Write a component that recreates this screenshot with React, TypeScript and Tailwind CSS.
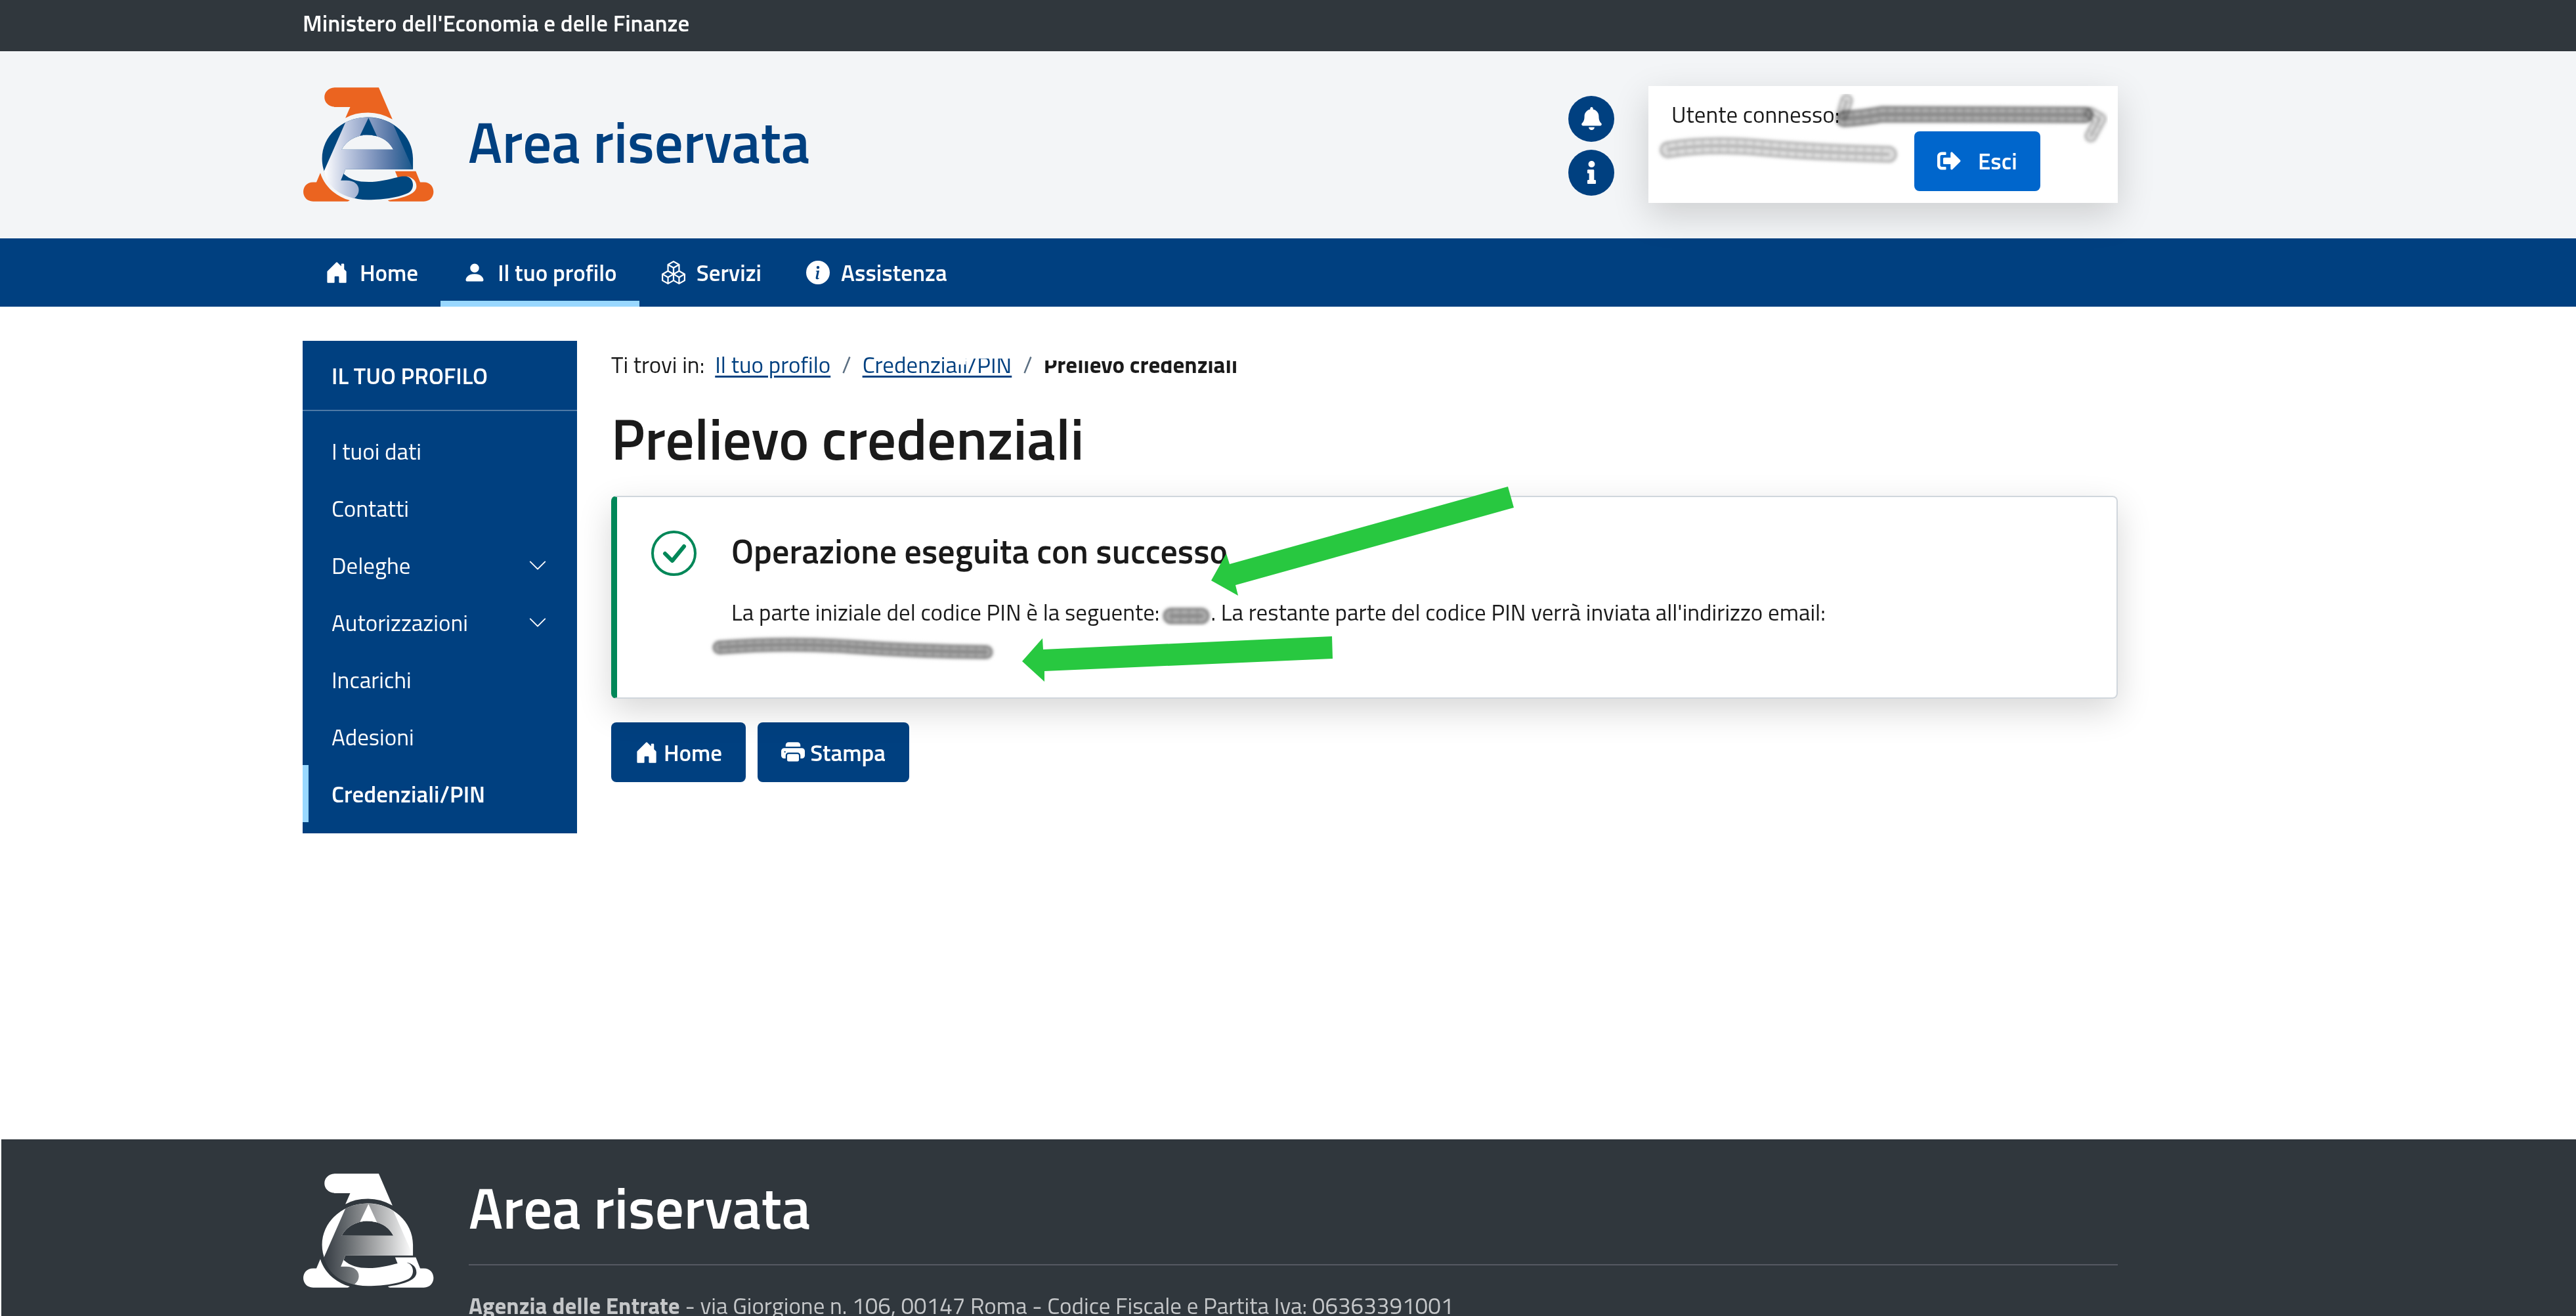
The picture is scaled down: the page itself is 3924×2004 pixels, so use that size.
import type { ReactNode } from "react";
import {
  BsBoxes,
  BsChevronDown,
  BsHouseDoorFill,
  BsInfoCircleFill,
  BsPersonFill,
  BsPrinterFill,
} from "react-icons/bs";
import { FaBell, FaInfo, FaSignOutAlt } from "react-icons/fa";

type LogoProps = {
  id: string;
  outer: string;
  ring: string;
  stops: [string, string][];
};

function Logo({ id, outer, ring, stops }: LogoProps) {
  return (
    <svg viewBox="63 68 600 524" className="h-[174px] w-[200px] shrink-0" role="img" aria-label="Agenzia delle Entrate">
      <defs>
        <linearGradient id={id} gradientUnits="userSpaceOnUse" x1="160" y1="0" x2="568" y2="0">
          {stops.map(([offset, color]) => (
            <stop key={offset} offset={offset} stopColor={color} />
          ))}
        </linearGradient>
      </defs>
      <g fill={outer}>
        <path d="M213 69H411L474 215Q420 184 362 184Q300 184 258 209L280 158H213C145 158 145 69 213 69Z" />
        <path d="M143 460C160 520 215 570 278 586Q275 590 268 591H110C50 591 50 503 110 503H125Z" />
        <path d="M486 453H581L601 503H618C677 503 677 591 618 591H462Q455 590 453 586C510 578 584 562 584 522C584 498 568 484 545 477L498 482Z" />
      </g>
      <path
        fill={ring}
        fillRule="evenodd"
        d="M568 444V395C568 290 475 205 360 205C245 205 151 290 151 395C151 500 240 584 362 584C440 584 510 570 545 553C575 538 575 495 548 480C535 474 515 476 500 480C455 491 410 502 365 502C315 502 280 492 250 465L258 444ZM241 353C262 312 308 286 360 286C415 286 458 312 478 353Z"
      />
      <path
        fill={`url(#${id})`}
        fillRule="evenodd"
        d="M258 229Q305 205 362 205Q430 207 478 240L568 444H258L237 495H262C325 495 335 550 298 577C225 560 175 520 160 452ZM241 353C262 312 308 286 360 286C415 286 458 312 478 353Z"
      />
      <path fill={ring} d="M364 208L403 292Q360 281 325 289Z" />
    </svg>
  );
}

const headerStops: [string, string][] = [
  ["0", "#ffffff"],
  ["0.25", "#c0cae1"],
  ["0.5", "#8c9fc5"],
  ["0.75", "#5576a6"],
  ["1", "#17568a"],
];

const footerStops: [string, string][] = [
  ["0", "#363c43"],
  ["0.25", "#64696d"],
  ["0.5", "#97999b"],
  ["0.75", "#c8c9ca"],
  ["1", "#ffffff"],
];

type SmudgeProps = { d: string; width: number; viewBox: string; className: string; light?: boolean };

/* Brushed-out strip that covers personal data. */
function Smudge({ d, width, viewBox, className, light }: SmudgeProps) {
  return (
    <svg viewBox={viewBox} className={`mix-blend-multiply ${className}`} aria-hidden="true">
      <g fill="none" strokeLinejoin="round" strokeLinecap="round" className="blur-[2px]">
        <path d={d} stroke="#eeeeee" strokeWidth={width + 6} />
        <path d={d} stroke={light ? "#a0a0a0" : "#666666"} strokeWidth={width} />
        <path d={d} stroke={light ? "#dadada" : "#aaaaaa"} strokeWidth={width - 4} />
        <path d={d} stroke={light ? "#909090" : "#888888"} strokeWidth={light ? 2 : 5} />
        <path
          d={d}
          stroke={light ? "#bcbcbc" : "#8c8c8c"}
          strokeWidth={width - 4}
          strokeDasharray="2 11"
          strokeLinecap="butt"
        />
      </g>
    </svg>
  );
}

function NavItem({ icon, label, active }: { icon: ReactNode; label: string; active?: boolean }) {
  return (
    <li>
      <a
        href="#"
        className={`flex h-[104px] items-center gap-[17px] px-[34px] font-semibold text-white ${
          active ? "shadow-[inset_0_-9px_0_#99d8ff]" : ""
        }`}
      >
        {icon}
        {label}
      </a>
    </li>
  );
}

const sideItems = [
  { label: "I tuoi dati" },
  { label: "Contatti" },
  { label: "Deleghe", expandable: true },
  { label: "Autorizzazioni", expandable: true },
  { label: "Incarichi" },
  { label: "Adesioni" },
  { label: "Credenziali/PIN", active: true },
];

const buttonClass =
  "flex h-[91px] items-center gap-2 rounded-lg bg-[#004080] px-9 font-semibold text-white";

export default function App() {
  return (
    <div className="flex h-screen flex-col overflow-hidden bg-white font-['Titillium_Web',Roboto,sans-serif] text-[35px] leading-[52px] text-[#1a1a1a]">
      <div className="flex h-[78px] shrink-0 items-center bg-[#30373d] pr-[698px] pb-2 pl-[461px] font-semibold text-white">
        Ministero dell'Economia e delle Finanze
      </div>

      <header className="flex h-[285px] shrink-0 items-center bg-[#f3f5f7] pr-[698px] pb-0.5 pl-[461px]">
        <Logo id="logo-header" outer="#eb6420" ring="#00477f" stops={headerStops} />
        <div className="ml-[52px] flex-1 pb-2 text-[87px] leading-[104px] font-semibold text-[#004080]">
          Area riservata
        </div>
        <div className="mr-[52px] flex flex-col gap-3 pt-1">
          <button aria-label="Notifiche" className="flex size-[70px] items-center justify-center rounded-full bg-[#004080] text-white">
            <FaBell className="size-[35px]" />
          </button>
          <button aria-label="Informazioni" className="flex size-[70px] items-center justify-center rounded-full bg-[#004080] text-white">
            <FaInfo className="size-[35px]" />
          </button>
        </div>
        <div className="relative h-[178px] w-[715px] bg-white pt-[17px] pl-[35px] shadow-[0_18px_52px_rgba(0,0,0,0.16)]">
          <div>Utente connesso:</div>
          <button className="ml-[370px] flex h-[91px] items-center gap-[26px] rounded-lg bg-[#0066cc] px-[35px] font-semibold text-white">
            <FaSignOutAlt className="size-9" />
            Esci
          </button>
          <Smudge
            className="absolute top-3 left-[280px] h-[80px] w-[430px]"
            viewBox="0 0 430 80"
            width={24}
            d="M18 38Q50 36 76 31L385 32"
          />
          <Smudge
            className="absolute top-3 left-[270px] h-[80px] w-[430px]"
            viewBox="0 0 430 80"
            width={18}
            light
            d="M32 10L26 30"
          />
          <Smudge
            className="absolute top-3 left-[270px] h-[80px] w-[430px]"
            viewBox="0 0 430 80"
            width={18}
            light
            d="M404 30L418 38L404 64"
          />
          <Smudge
            className="absolute top-[72px] left-3 h-[50px] w-[380px]"
            viewBox="0 0 380 50"
            width={24}
            light
            d="M18 25Q80 15 160 22T354 32"
          />
        </div>
      </header>

      <nav className="shrink-0 bg-[#004080] pr-[698px] pl-[461px]">
        <ul className="flex">
          <NavItem icon={<BsHouseDoorFill className="size-9" />} label="Home" />
          <NavItem icon={<BsPersonFill className="size-9" />} label="Il tuo profilo" active />
          <NavItem icon={<BsBoxes className="size-9" />} label="Servizi" />
          <NavItem icon={<BsInfoCircleFill className="size-9" />} label="Assistenza" />
        </ul>
      </nav>

      <div className="grid flex-1 grid-cols-[418px_1fr] items-start gap-[52px] pt-[52px] pr-[698px] pl-[461px]">
        <aside className="bg-[#004080] pb-[17px] text-white">
          <h2 className="flex h-[107px] items-center border-b-2 border-[#4d79a6] pl-11 font-semibold">IL TUO PROFILO</h2>
          <ul className="pt-[17px]">
            {sideItems.map((item) => (
              <li key={item.label}>
                <a
                  href="#"
                  className={`flex h-[87px] items-center justify-between border-l-[9px] pr-[45px] pl-[35px] ${
                    item.active ? "border-[#99d8ff] font-semibold" : "border-transparent"
                  }`}
                >
                  {item.label}
                  {item.expandable && <BsChevronDown className="size-[30px]" />}
                </a>
              </li>
            ))}
          </ul>
        </aside>

        <main>
          <nav aria-label="Percorso" className="mt-[10px] flex">
            <span className="mr-4">Ti trovi in:</span>
            <a href="#" className="text-[#004080] underline decoration-3 underline-offset-4">
              Il tuo profilo
            </a>
            <span className="mx-[17px] text-[#5b6f82]">/</span>
            <span className="relative">
              <a href="#" className="text-[#004080] underline decoration-3 underline-offset-4">
                Credenziali/PIN
              </a>
              <span className="absolute top-0 -right-2 h-[17px] w-[86px] bg-white" />
              <span className="absolute top-2 right-[70px] h-[18px] w-[14px] bg-white" />
            </span>
            <span className="mx-[17px] text-[#5b6f82]">/</span>
            <span className="relative font-bold">
              Prelievo credenziali
              <span className="absolute inset-x-0 top-0 h-[20px] bg-white" />
            </span>
          </nav>

          <h1 className="mt-[35px] text-[87px] leading-[104px] font-semibold">Prelievo credenziali</h1>

          <section className="relative mt-[35px] flex gap-[53px] rounded-lg border-2 border-l-[9px] border-[#d0d6dc] border-l-[#008758] bg-white pt-[51px] pr-9 pb-[52px] pl-[52px] shadow-[0_18px_52px_rgba(0,0,0,0.16)]">
            <svg viewBox="0 0 69 69" className="size-[69px] shrink-0" fill="none" stroke="#008758" aria-hidden="true">
              <circle cx="34.5" cy="34.5" r="32.5" strokeWidth="4" />
              <path d="M21 35L32 46L50 24" strokeWidth="6" strokeLinecap="round" strokeLinejoin="round" />
            </svg>
            <div>
              <h2 className="text-[52px] leading-[62px] font-semibold">Operazione eseguita con successo</h2>
              <p className="mt-9">
                La parte iniziale del codice PIN è la seguente:
                <Smudge
                  className="-mx-1 inline-block h-[36px] w-[86px]"
                  viewBox="0 0 86 36"
                  width={24}
                  d="M22 20H68"
                />
                . La restante parte del codice PIN verrà inviata all'indirizzo email:
              </p>
              <Smudge
                className="-ml-9 h-[52px] w-[444px]"
                viewBox="0 0 444 52"
                width={20}
                d="M18 28Q120 20 220 27T424 35"
              />
            </div>
            <svg
              viewBox="0 0 1110 370"
              className="pointer-events-none absolute -top-[57px] left-[600px] h-[370px] w-[1110px]"
              fill="#28c840"
              aria-hidden="true"
            >
              <path d="M305 184L328 143L333 159L757 41L766 73L342 191L346 207Z" />
              <path d="M17 307L48 272L49 289L489 269L490 303L51 322L51 338Z" />
            </svg>
          </section>

          <div className="mt-9 flex gap-[18px]">
            <button className={buttonClass}>
              <BsHouseDoorFill className="size-9" />
              Home
            </button>
            <button className={buttonClass}>
              <BsPrinterFill className="size-9" />
              Stampa
            </button>
          </div>
        </main>
      </div>

      <footer className="flex h-[269px] shrink-0 gap-[53px] border-l-2 border-white bg-[#30373d] pt-[52px] pr-[698px] pl-[459px]">
        <Logo id="logo-footer" outer="#ffffff" ring="#ffffff" stops={footerStops} />
        <div className="flex-1">
          <div className="text-[87px] leading-[104px] font-semibold text-white">Area riservata</div>
          <hr className="mt-[34px] border-t-2 border-[#555962]" />
          <p className="mt-[35px] text-[#c5c7c9]">
            <strong className="font-bold">Agenzia delle Entrate</strong> - via Giorgione n. 106, 00147 Roma - Codice Fiscale e
            Partita Iva: 06363391001
          </p>
        </div>
      </footer>
    </div>
  );
}
